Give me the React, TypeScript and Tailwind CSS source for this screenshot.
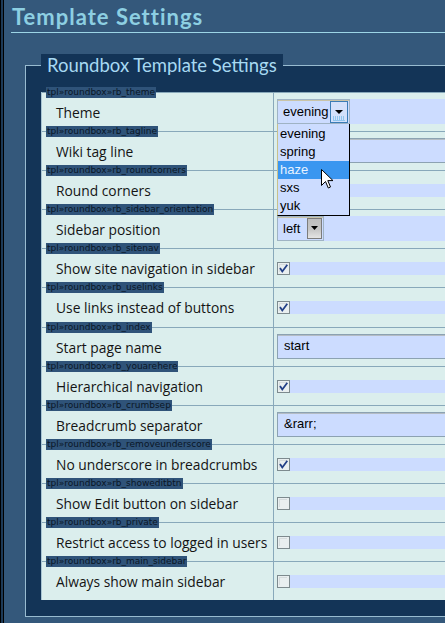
import React from "react";

type Row = {
  tag: string;
  label: string;
  kind: "select" | "text" | "check";
  value?: string;
  checked?: boolean;
  open?: boolean;
  width?: number;
};

const rows: Row[] = [
  { tag: "rb_theme", label: "Theme", kind: "select", value: "evening", open: true, width: 73 },
  { tag: "rb_tagline", label: "Wiki tag line", kind: "text", value: "" },
  { tag: "rb_roundcorners", label: "Round corners", kind: "check", checked: false },
  { tag: "rb_sidebar_orientation", label: "Sidebar position", kind: "select", value: "left", width: 47 },
  { tag: "rb_sitenav", label: "Show site navigation in sidebar", kind: "check", checked: true },
  { tag: "rb_uselinks", label: "Use links instead of buttons", kind: "check", checked: true },
  { tag: "rb_index", label: "Start page name", kind: "text", value: "start" },
  { tag: "rb_youarehere", label: "Hierarchical navigation", kind: "check", checked: true },
  { tag: "rb_crumbsep", label: "Breadcrumb separator", kind: "text", value: "&rarr;" },
  { tag: "rb_removeunderscore", label: "No underscore in breadcrumbs", kind: "check", checked: true },
  { tag: "rb_showeditbtn", label: "Show Edit button on sidebar", kind: "check", checked: false },
  { tag: "rb_private", label: "Restrict access to logged in users", kind: "check", checked: false },
  { tag: "rb_main_sidebar", label: "Always show main sidebar", kind: "check", checked: false },
];

const themes = ["evening", "spring", "haze", "sxs", "yuk"];

const CheckIcon: React.FC<{ checked?: boolean }> = ({ checked }) => (
  <svg width="13" height="13" viewBox="0 0 13 13" className="block shrink-0">
    <rect x="0.5" y="0.5" width="12" height="12" fill="#e9eff0" stroke="#7d8a8e" />
    <path d="M2.5 2.5 H10" stroke="#c2c8cb" strokeDasharray="1 1" />
    <path d="M2.5 3.5 V10" stroke="#c2c8cb" strokeDasharray="1 1" />
    {checked && (
      <path d="M3 6 L5.3 9.5 L10.3 2.8" fill="none" stroke="#213f86" strokeWidth="1.8" />
    )}
  </svg>
);

const BlueArrow = () => (
  <svg width="18" height="22" viewBox="0 0 18 22" className="block">
    <rect x="0.5" y="0.5" width="17" height="21" fill="#d3e1fb" stroke="#3b7db6" />
    <path d="M5 9 H13 L9 13 Z" fill="#000" />
    {[3, 5, 7, 9, 11, 13].map((x) => (
      <rect key={x} x={x} y="15" width="1" height="5" fill="#8fc6ee" />
    ))}
    <rect x="3" y="19" width="12" height="1" fill="#8fc6ee" />
  </svg>
);

const GreyArrow = () => (
  <svg width="15" height="21" viewBox="0 0 15 21" className="block">
    <defs>
      <linearGradient id="gb" x1="0" y1="0" x2="0" y2="1">
        <stop offset="0" stopColor="#bdbdbd" />
        <stop offset="0.55" stopColor="#c6c6c6" />
        <stop offset="1" stopColor="#e6e6e6" />
      </linearGradient>
    </defs>
    <rect x="0.5" y="0.5" width="14" height="20" fill="url(#gb)" stroke="#7c7c7c" />
    <path d="M4 8 H11 L7.5 12 Z" fill="#000" />
  </svg>
);

const Cursor = () => (
  <svg width="13" height="21" viewBox="0 0 13 21" className="block">
    <path
      d="M0.5 0.5 L0.5 16.5 L4.5 12.5 L7.3 19 L9.5 18 L6.8 11.6 L12 11.6 Z"
      fill="#fff"
      stroke="#000"
      strokeLinejoin="round"
    />
  </svg>
);

const SelectCell: React.FC<{ row: Row }> = ({ row }) => (
  <div className="h-[25px] bg-[#ccdcff]">
    <div
      className="relative flex h-[25px] items-center justify-between border border-[#9fb3c4] bg-[#ccdcff] pl-[5px] pr-[1px] shadow-[inset_0_1px_0_#c9c4a8]"
      style={{ width: row.width }}
    >
      <span className="text-[13px] leading-[16px] text-black">{row.value}</span>
      {row.open ? <BlueArrow /> : <GreyArrow />}
      {row.open && (
        <div className="absolute left-[-1px] top-[24px] z-20 w-[73px] border-b border-l border-r border-b-black border-l-[#c9c08a] border-r-black bg-[#ccdcff] pt-[1px]">
          {themes.map((t) => (
            <div
              key={t}
              className={
                t === "haze"
                  ? "h-[18px] bg-[#3a96f0] pl-[2px] text-[13px] leading-[18px] text-[#e8f2ff]"
                  : "h-[18px] pl-[2px] text-[13px] leading-[18px] text-black"
              }
            >
              {t}
            </div>
          ))}
          <div className="absolute left-[43px] top-[45px]">
            <Cursor />
          </div>
        </div>
      )}
    </div>
  </div>
);

const TextCell: React.FC<{ value?: string }> = ({ value }) => (
  <div className="flex h-[25px] w-[200px] items-center border border-[#8ca2b2] bg-[#ccdcff] pl-[6px] shadow-[inset_0_1px_0_#b4bcc4]">
    <span className="text-[13px] leading-[16px] text-black">{value}</span>
  </div>
);

const CheckCell: React.FC<{ checked?: boolean }> = ({ checked }) => (
  <div className="h-[13px] bg-[#ccdcff]">
    <CheckIcon checked={checked} />
  </div>
);

export default function App() {
  return (
    <div
      className="flex h-[623px] w-[445px] overflow-hidden bg-[#34587b]"
      style={{ fontFamily: '"Liberation Sans", Arial, sans-serif' }}
    >
      <div className="w-[4px] shrink-0 border-x border-black bg-[#1d3a58]" />
      <div className="flex-1">
        <h1 className="ml-[7px] h-[33px] border-b border-[#9dd5e6] pl-[1px] pt-[4px] font-['Lato',sans-serif] text-[22px] font-bold leading-[26px] tracking-[1px] text-[#8dcfe2]">
          Template Settings
        </h1>
        <fieldset className="ml-[21px] mt-[21px] w-[470px] border border-[#98bbd0] bg-[#133457] pb-[16px] pl-[15px] pt-[16px]">
          <legend className="h-[22px] bg-[#133457] px-[6px] font-['Lato',sans-serif] text-[18.5px] leading-[22px] text-[#a7d9f2]">
            Roundbox Template Settings
          </legend>
          <div className="border-l border-[#a9c6d4] bg-[#dbeeed]">
            {rows.map((row) => (
              <div key={row.tag} className="relative flex h-[39.1px] border-t border-[#88a8ba]">
                <span className="absolute left-[4px] top-[-6px] z-10 h-[11px] bg-[#2f5379] px-[1px] font-['DejaVu_Sans',sans-serif] text-[9px] leading-[11px] text-[#0a1626]">
                  tpl»roundbox»{row.tag}
                </span>
                <div className="w-[231px] shrink-0 pl-[14px] pt-[10px] font-['Open_Sans',sans-serif] text-[13.8px] leading-[20px] text-[#141414]">
                  {row.label}
                </div>
                <div
                  className={
                    row.kind === "check"
                      ? "flex-1 border-l border-[#88a8ba] pl-[3px] pt-[13px]"
                      : "flex-1 border-l border-[#88a8ba] pl-[3px] pt-[6px]"
                  }
                >
                  {row.kind === "select" && <SelectCell row={row} />}
                  {row.kind === "text" && <TextCell value={row.value} />}
                  {row.kind === "check" && <CheckCell checked={row.checked} />}
                </div>
              </div>
            ))}
          </div>
        </fieldset>
      </div>
    </div>
  );
}
